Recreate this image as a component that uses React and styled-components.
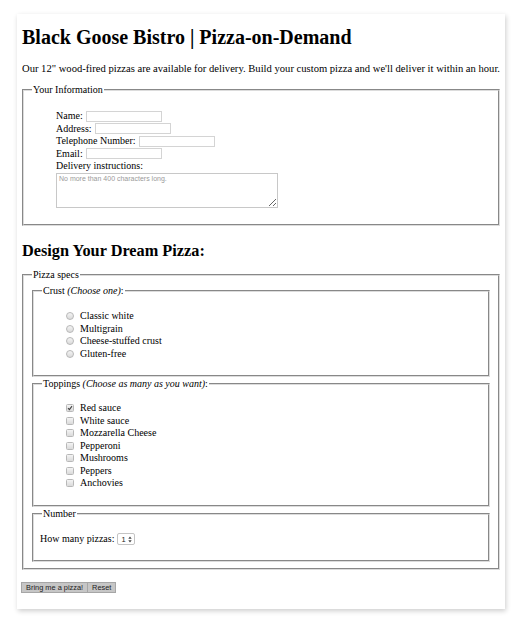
import React from 'react';
import styled, { createGlobalStyle } from 'styled-components';

const GlobalStyle = createGlobalStyle`
  body {
    margin: 0;
    background: #fff;
    font-family: "Liberation Serif", "Times New Roman", serif;
    font-size: 10px;
    color: #000;
  }
`;

const Page = styled.div`
  padding: 14px 0 20px 17px;
`;

const Card = styled.div`
  width: 488px;
  box-sizing: border-box;
  padding: 11px 5px 16px;
  background: #fff;
  box-shadow: 1px 2px 5px rgba(0, 0, 0, 0.2);
`;

const Title = styled.h1`
  margin: 0;
  font-size: 20px;
  line-height: 24px;
  font-weight: bold;
`;

const Intro = styled.p`
  margin: 14px 0 0;
  font-size: 10.6px;
  line-height: 12.5px;
  white-space: nowrap;
`;

const SubTitle = styled.h2`
  margin: 14.5px 0 0;
  font-size: 16.3px;
  line-height: 19px;
  font-weight: bold;
`;

const Fieldset = styled.fieldset`
  margin: ${(p) => p.$mt || 0}px 0 0;
  padding: ${(p) => p.$pt || 0}px 8px ${(p) => p.$pb || 0}px ${(p) => p.$pl ?? 8}px;
  border: 2px groove #dcdcdc;
  min-inline-size: 0;
`;

const Legend = styled.legend`
  padding: 0 1px;
  margin-left: ${(p) => p.$shift || 0}px;
  line-height: 12.5px;
  font-size: 10px;
`;

const List = styled.ul`
  list-style: none;
  margin: 0;
  padding: ${(p) => p.$pt}px 0 0 24px;
`;

const Row = styled.li`
  display: flex;
  align-items: center;
  gap: ${(p) => p.$gap ?? 3}px;
  height: 12.5px;
  line-height: 12.5px;
`;

const TextInput = styled.input`
  width: 76px;
  height: 11px;
  box-sizing: border-box;
  margin: 0;
  padding: 0;
  border: 1px solid #d4d4d4;
  background: #fff;
`;

const Notes = styled.textarea`
  display: block;
  width: 222px;
  height: 35px;
  box-sizing: border-box;
  margin: 0;
  padding: 1px 2px;
  border: 1px solid #c8c8c8;
  font-family: "Liberation Sans", Arial, sans-serif;
  font-size: 7px;
  resize: both;
  &::placeholder {
    color: #9a9a9a;
  }
`;

const Mark = styled.span`
  display: inline-flex;
  align-items: center;
  justify-content: center;
  width: 8px;
  height: 8px;
  box-sizing: border-box;
  border: 1px solid #b8b8b8;
  border-radius: ${(p) => (p.$round ? '50%' : '1.5px')};
  background: linear-gradient(#f4f4f4, #dadada);
  flex: none;
`;

const Choice = ({ round, checked, children }) => (
  <Row $gap={6}>
    <Mark $round={round}>
      {checked && (
        <svg width="6" height="6" viewBox="0 0 6 6">
          <path d="M1 3.2 L2.4 4.6 L5 1.2" fill="none" stroke="#444" strokeWidth="1.1" />
        </svg>
      )}
    </Mark>
    {children}
  </Row>
);

const Spinner = styled.span`
  display: inline-flex;
  align-items: center;
  gap: 2px;
  height: 12px;
  box-sizing: border-box;
  padding: 0 2px 0 3px;
  border: 1px solid #c4c4c4;
  border-radius: 2px;
  background: #fff;
`;

const Select = styled.select`
  appearance: none;
  border: none;
  background: transparent;
  padding: 0;
  margin: 0;
  font-family: "Liberation Sans", Arial, sans-serif;
  font-size: 7.5px;
  color: #222;
`;

const Actions = styled.div`
  display: flex;
  margin-top: 12px;
  margin-left: -1px;
`;

const Button = styled.button`
  height: 11px;
  box-sizing: border-box;
  margin: 0;
  padding: 0 4px;
  border: 1px solid #a6a6a6;
  background: #c6c6c6;
  color: #222;
  font-family: "Liberation Sans", Arial, sans-serif;
  font-size: 7.4px;
  line-height: 9px;
  & + & {
    border-left: none;
  }
`;

const crusts = ['Classic white', 'Multigrain', 'Cheese-stuffed crust', 'Gluten-free'];
const toppings = [
  'Red sauce',
  'White sauce',
  'Mozzarella Cheese',
  'Pepperoni',
  'Mushrooms',
  'Peppers',
  'Anchovies',
];

export default function App() {
  return (
    <Page>
      <GlobalStyle />
      <Card>
        <Title>Black Goose Bistro | Pizza-on-Demand</Title>
        <Intro>
          Our 12" wood-fired pizzas are available for delivery. Build your custom pizza and we'll
          deliver it within an hour.
        </Intro>

        <Fieldset $mt={8.5} $pb={16.5}>
          <Legend>Your Information</Legend>
          <List $pt={13.5}>
            <Row>
              Name: <TextInput type="text" />
            </Row>
            <Row>
              Address: <TextInput type="text" />
            </Row>
            <Row>
              Telephone Number: <TextInput type="text" />
            </Row>
            <Row>
              Email: <TextInput type="text" />
            </Row>
            <Row>Delivery instructions:</Row>
            <li>
              <Notes placeholder="No more than 400 characters long." />
            </li>
          </List>
        </Fieldset>

        <SubTitle>Design Your Dream Pizza:</SubTitle>

        <Fieldset $mt={9.5} $pt={3.5} $pb={6}>
          <Legend>Pizza specs</Legend>

          <Fieldset $pb={15}>
            <Legend>
              Crust <em>(Choose one)</em>:
            </Legend>
            <List $pt={12.5}>
              {crusts.map((c) => (
                <Choice key={c} round>
                  {c}
                </Choice>
              ))}
            </List>
          </Fieldset>

          <Fieldset $mt={1} $pb={15.5}>
            <Legend>
              Toppings <em>(Choose as many as you want)</em>:
            </Legend>
            <List $pt={11.5}>
              {toppings.map((t, i) => (
                <Choice key={t} checked={i === 0}>
                  {t}
                </Choice>
              ))}
            </List>
          </Fieldset>

          <Fieldset $mt={1} $pt={12.5} $pb={14} $pl={6}>
            <Legend $shift={2}>Number</Legend>
            <Row>
              How many pizzas:
              <Spinner>
                <Select defaultValue="1">
                  <option>1</option>
                  <option>2</option>
                  <option>3</option>
                  <option>4</option>
                  <option>5</option>
                </Select>
                <svg width="4" height="7" viewBox="0 0 4 7">
                  <path d="M0.3 2.8 L2 0.6 L3.7 2.8 Z M0.3 4.2 L2 6.4 L3.7 4.2 Z" fill="#444" />
                </svg>
              </Spinner>
            </Row>
          </Fieldset>
        </Fieldset>

        <Actions>
          <Button type="submit">Bring me a pizza!</Button>
          <Button type="reset">Reset</Button>
        </Actions>
      </Card>
    </Page>
  );
}
